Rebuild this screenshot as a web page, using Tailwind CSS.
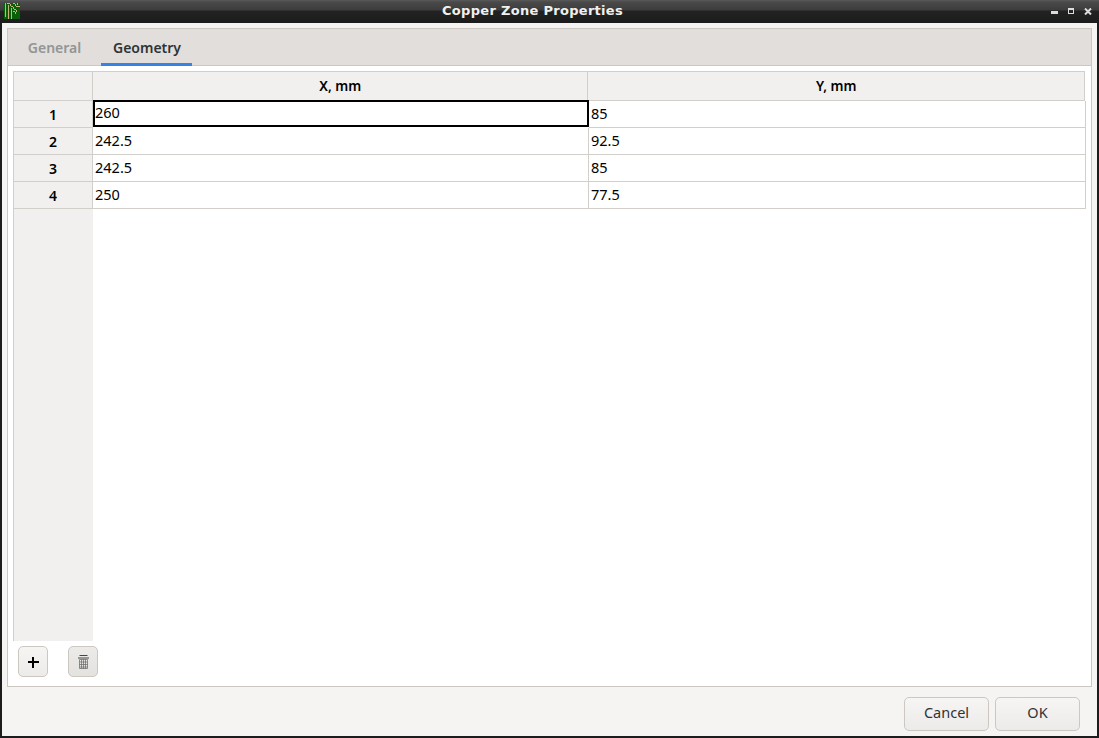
<!DOCTYPE html>
<html>
<head>
<meta charset="utf-8">
<script src="https://cdn.jsdelivr.net/npm/@tailwindcss/browser@4"></script>
</head>
<body class="m-0 overflow-hidden bg-[#1c1c1c]">
<div class="w-[1099px] h-[738px] flex flex-col bg-[#1c1c1c] font-['Noto_Sans',sans-serif] text-[14.5px] text-black">
  <!-- title bar -->
  <div class="relative h-[23px] shrink-0 flex items-center pl-[442px] bg-[linear-gradient(#5a5a5a_0px,#4a4a4a_2px,#3c3c3c_10px,#222222_11px,#1c1c1c_23px)]">
    <svg class="absolute left-[4px] top-[3px]" width="16" height="16" viewBox="0 0 16 16" shape-rendering="crispEdges">
      <path d="M0 0H16V16H0Z" fill="#0b5f0b"/>
      <path d="M1 0H2V14H1ZM4 2H5V16H4ZM7 5H8V16H7ZM3 0H6V1H3ZM6 1H7V3H6ZM7 3H9V4H7ZM9 4H10V6H9ZM10 6H12V7H10ZM12 7H13V9H12ZM9 8H11V9H9ZM11 9H12V11H11ZM9 0H11V1H9ZM11 1H12V3H11ZM12 3H16V4H12ZM13 0H14V2H13Z" fill="#c8b27a"/>
    </svg>
    <span class="font-['DejaVu_Sans',sans-serif] font-bold text-[13px] text-[#f0f0f0] leading-none tracking-[0.3px] -mt-[3px]">Copper Zone Properties</span>
    <div class="absolute left-[1051px] top-[11px] w-[7px] h-[3px] bg-[#dcdcdc]"></div>
    <div class="absolute left-[1068px] top-[8px] w-[6px] h-[6px] border border-t-2 border-[#dcdcdc]"></div>
    <svg class="absolute left-[1084px] top-[8px]" width="8" height="7" viewBox="0 0 8 7"><path d="M1 0.5L7 6.5M7 0.5L1 6.5" stroke="#dcdcdc" stroke-width="2"/></svg>
  </div>
  <!-- dialog -->
  <div class="mx-[2px] mb-[2px] flex-1 min-h-0 flex flex-col bg-[#f5f4f2] px-[5px] pt-[5px]">
    <div class="h-[659px] shrink-0 flex flex-col border border-[#cdc7c2] bg-white">
      <!-- tabs -->
      <div class="h-[37px] shrink-0 flex bg-[#e1dedb] border-b border-[#cdc7c2] pl-[9px] text-[14px] font-semibold">
        <div class="w-[75px] h-[36px] flex items-center justify-center text-[#929595]">General</div>
        <div class="ml-[9px] w-[91px] h-[37px] flex items-center justify-center text-[#2e3436] border-b-[3px] border-[#3584e4] pt-[2px] pl-[1px]">Geometry</div>
      </div>
      <!-- grid -->
      <div class="flex-1 min-h-0 flex flex-col pl-[5px] pt-[5px] pr-[6px]">
        <div class="flex-1 min-h-0 flex flex-col border-t border-l border-[#d2cec9] ">
          <div class="flex h-[29px] shrink-0 bg-[#f1f0ee] font-semibold text-[13.5px] border-b border-[#d2cec9]">
            <div class="w-[79px] border-r border-[#d2cec9]"></div>
            <div class="w-[496px] flex items-center justify-center border-r border-[#d2cec9]">X, mm</div>
            <div class="w-[497px] flex items-center justify-center border-r border-[#d2cec9]">Y, mm</div>
          </div>
          <div class="flex flex-1 min-h-0">
            <div class="w-[79px] shrink-0 bg-[#f1f0ee] flex flex-col font-semibold text-[14px]">
              <div class="h-[27px] flex items-center justify-center border-b border-r border-[#d2cec9]">1</div>
              <div class="h-[27px] flex items-center justify-center border-b border-r border-[#d2cec9]">2</div>
              <div class="h-[27px] flex items-center justify-center border-b border-r border-[#d2cec9]">3</div>
              <div class="h-[27px] flex items-center justify-center border-b border-r border-[#d2cec9]">4</div>
            </div>
            <div class="flex-1 flex flex-col">
              <div class="flex h-[27px]">
                <div class="w-[496px] border-2 border-black leading-[21px] -mt-[1px] h-[27px]">260</div>
                <div class="w-[497px] border-b border-r border-[#d2cec9] pl-[2px] leading-[24px]">85</div>
              </div>
              <div class="flex h-[27px]">
                <div class="w-[496px] border-b border-r border-[#d2cec9] pl-[2px] leading-[24px]">242.5</div>
                <div class="w-[497px] border-b border-r border-[#d2cec9] pl-[2px] leading-[24px]">92.5</div>
              </div>
              <div class="flex h-[27px]">
                <div class="w-[496px] border-b border-r border-[#d2cec9] pl-[2px] leading-[24px]">242.5</div>
                <div class="w-[497px] border-b border-r border-[#d2cec9] pl-[2px] leading-[24px]">85</div>
              </div>
              <div class="flex h-[27px]">
                <div class="w-[496px] border-b border-r border-[#d2cec9] pl-[2px] leading-[24px]">250</div>
                <div class="w-[497px] border-b border-r border-[#d2cec9] pl-[2px] leading-[24px]">77.5</div>
              </div>
            </div>
          </div>
        </div>
        <!-- toolbar -->
        <div class="h-[45px] shrink-0 flex items-start pt-[5px] pl-[5px] gap-[20px]">
          <button class="w-[30px] h-[31px] flex items-center justify-center rounded-[5px] border border-[#cdc7c2] bg-[linear-gradient(#f6f5f4,#edebe9)]">
            <svg width="12" height="12" viewBox="0 0 12 12" shape-rendering="crispEdges"><path d="M6 0.5V11.5M0.5 6H11.5" stroke="#000" stroke-width="2.5"/></svg>
          </button>
          <button class="w-[30px] h-[31px] flex items-center justify-center rounded-[5px] border border-[#cdc7c2] bg-[linear-gradient(#ecebe9,#e4e2df)]">
            <svg width="11" height="14" viewBox="0 0 11 14"><path d="M1.5 0.5H9.5M0 3H11" stroke="#444" stroke-width="1" fill="none"/><path d="M1.5 4.5H9.5V13.5H1.5ZM3.5 4.5V13.5M5.5 4.5V13.5M7.5 4.5V13.5M1.5 7H9.5M1.5 9.5H9.5M1.5 12H9.5" stroke="#666" stroke-width="0.7" fill="none"/></svg>
          </button>
        </div>
      </div>
    </div>
    <!-- footer -->
    <div class="flex justify-end gap-[6px] pt-[10px] pr-[12px]">
      <button class="w-[85px] h-[34px] rounded-[5px] border border-[#cdc7c2] bg-[linear-gradient(#f6f5f4,#edebe9)] text-[#2e3436] text-[14.5px] pb-[2px]">Cancel</button>
      <button class="w-[85px] h-[34px] rounded-[5px] border border-[#cdc7c2] bg-[linear-gradient(#f6f5f4,#edebe9)] text-[#2e3436] text-[14.5px] pb-[2px]">OK</button>
    </div>
  </div>
</div>
</body>
</html>
